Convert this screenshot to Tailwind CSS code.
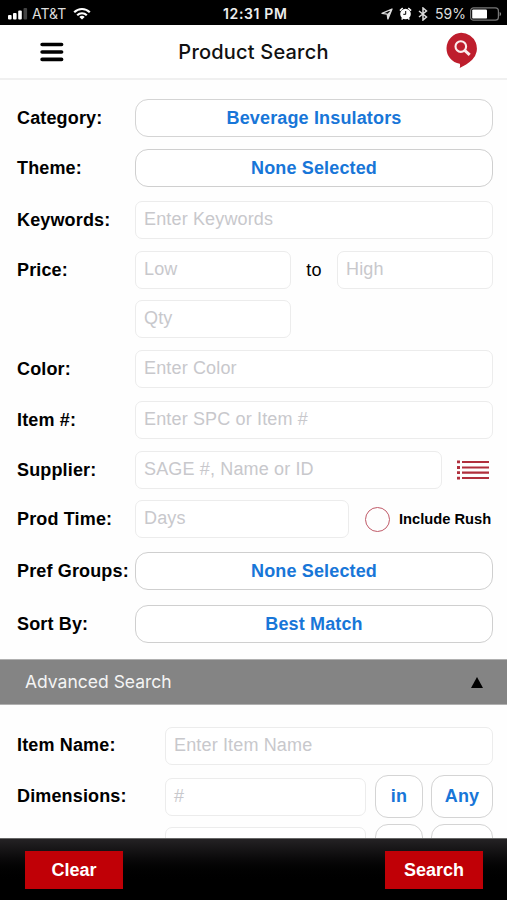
<!DOCTYPE html>
<html lang="en">
<head>
<meta charset="utf-8">
<title>Product Search</title>
<script src="https://cdn.jsdelivr.net/npm/@tailwindcss/browser@4"></script>
</head>
<body class="w-[507px] h-[900px] overflow-hidden bg-[#fefefe] font-['Liberation_Sans',sans-serif] text-[18px] text-black flex flex-col">

<header class="h-[25px] shrink-0 bg-black text-white font-['Inter',sans-serif] text-[13px] flex items-center pl-2 pr-[5px] pt-[2px]">
  <div class="w-[215px] flex items-center">
    <svg class="w-5 h-3" viewBox="0 0 20 12"><g fill="#fff"><rect x="0" y="7" width="3.6" height="4.5" rx="1"/><rect x="5" y="5" width="3.6" height="6.5" rx="1"/><rect x="10.200" y="2.500" width="3.600" height="9" rx="1"/></g><rect x="15.500" y="0" width="3.600" height="11.500" rx="1" fill="#444"/></svg>
    <span class="ml-[4px] text-[#ddd] text-[14px]">AT&amp;T</span>
    <svg class="ml-[7px] w-[18px] h-[13px]" viewBox="0 0 18 13" fill="none" stroke="#fff" stroke-width="2.200"><path d="M1.200 5.200C5.600.9 12.400.9 16.800 5.200M4.200 8.200c2.700-2.600 6.900-2.600 9.600 0"/><path d="M6.300 9.900c1.600-1.500 3.800-1.500 5.400 0L9 12.600z" fill="#fff" stroke="none"/></svg>
  </div>
  <div class="font-semibold text-[14px] tracking-[0.650px] whitespace-nowrap text-[#eee]">12:31 PM</div>
  <div class="flex-1 flex items-center justify-end">
    <svg class="w-3 h-3" viewBox="0 0 12 12" fill="none" stroke="#ddd" stroke-width="1.300" stroke-linejoin="round"><path d="M1 5.400 11 1 6.900 11l-.7-4.800z"/><path d="M6.200 6.200 11 1 6.900 11z" fill="#ddd" stroke="none"/></svg>
    <svg class="ml-[6px] w-[13px] h-[13px]" viewBox="0 0 13 13"><circle cx="6.500" cy="7" r="5.300" fill="#fff"/><path d="M.9 3.600 3.700 1M12.100 3.600 9.300 1M2.600 12.500l1.200-1.300M10.400 12.500l-1.200-1.300" stroke="#fff" stroke-width="1.500"/><path d="M6.700 4v3.300H4.300" stroke="#000" fill="none"/></svg>
    <svg class="ml-[6px] w-[10px] h-[14px]" viewBox="0 0 10 14" fill="none" stroke="#ddd" stroke-width="1.500"><path d="m1 4 7.500 6L5 13V1l3.500 3L1 10"/></svg>
    <span class="ml-[7px] text-[#ddd] text-[14px]">59%</span>
    <svg class="ml-[4px] w-[32px] h-[14px]" viewBox="0 0 32 14"><rect x=".6" y=".8" width="27.800" height="12.400" rx="3" fill="none" stroke="#777" stroke-width="1.200"/><rect x="2.200" y="2.400" width="14.800" height="9.200" rx="1.200" fill="#fff"/><path d="M29.600 5v4.200q1.500-.5 1.500-2.100T29.600 5" fill="#888"/></svg>
  </div>
</header>

<nav class="h-[55px] shrink-0 bg-white border-b-2 border-[#f0f0f0] grid grid-cols-[1fr_auto_1fr] items-center pl-[29px] pr-[29px]">
  <svg class="ml-[11px] w-6 h-5" viewBox="0 0 24 20" stroke="#000" stroke-width="3.600" stroke-linecap="round"><path d="M2.100 2.500h19.500M2.100 10h19.500M2.100 17.400h19.500"/></svg>
  <h1 class="font-['Inter',sans-serif] font-medium text-[20px] tracking-[0.2px] text-[#111] pt-px">Product Search</h1>
  <svg class="justify-self-end w-[33px] h-[37px] relative -top-[1px]" viewBox="0 0 33 37"><path d="M16.200.8a15.700 15.700 0 0 1 11 26.900C23.500 31 19 34 14.700 36c.5-1.500.5-3.300.1-4.200A15.600 15.600 0 0 1 16.200.8z" fill="#be1e2d"/><circle cx="15.800" cy="14.600" r="5.300" fill="none" stroke="#fbeeee" stroke-width="2.100"/><path d="m19.700 18.400 5 4.500" stroke="#fbeeee" stroke-width="3"/></svg>
</nav>

<main class="h-[579px] shrink-0 pt-[19px] pl-[17px] pr-[14px] flex flex-col font-bold tracking-[0.150px]">
  <div class="h-[38px] flex items-center"><span class="w-[118px] whitespace-nowrap">Category:</span><button class="flex-1 h-[38px] border-[1.500px] border-[#d4d4d4] rounded-[13px] text-[#1876d8] font-bold bg-white">Beverage Insulators</button></div>
  <div class="mt-[12px] h-[38px] flex items-center"><span class="w-[118px]">Theme:</span><button class="flex-1 h-[38px] border border-[#cfcfcf] rounded-[13px] text-[#1876d8] font-bold bg-white">None Selected</button></div>
  <div class="mt-[14px] h-[38px] flex items-center"><span class="w-[118px]">Keywords:</span><div class="flex-1 h-[38px] border border-[#ececec] rounded-[7px] bg-white pl-2 leading-[35px] font-normal text-[#c8c8cc]">Enter Keywords</div></div>
  <div class="mt-[12px] h-[38px] flex items-center"><span class="w-[118px]">Price:</span><div class="w-[156px] h-[38px] border border-[#ececec] rounded-[7px] bg-white pl-2 leading-[35px] font-normal text-[#c8c8cc]">Low</div><span class="w-[46px] text-center font-normal">to</span><div class="flex-1 h-[38px] border border-[#ececec] rounded-[7px] bg-white pl-2 leading-[35px] font-normal text-[#c8c8cc]">High</div></div>
  <div class="mt-[11px] h-[38px] flex items-center pl-[118px]"><div class="w-[156px] h-[38px] border border-[#ececec] rounded-[7px] bg-white pl-2 leading-[35px] font-normal text-[#c8c8cc]">Qty</div></div>
  <div class="mt-[12px] h-[38px] flex items-center"><span class="w-[118px]">Color:</span><div class="flex-1 h-[38px] border border-[#ececec] rounded-[7px] bg-white pl-2 leading-[35px] font-normal text-[#c8c8cc]">Enter Color</div></div>
  <div class="mt-[13px] h-[38px] flex items-center"><span class="w-[118px]">Item #:</span><div class="flex-1 h-[38px] border border-[#ececec] rounded-[7px] bg-white pl-2 leading-[35px] font-normal text-[#c8c8cc]">Enter SPC or Item #</div></div>
  <div class="mt-[12px] h-[38px] flex items-center"><span class="w-[118px]">Supplier:</span><div class="w-[307px] h-[38px] border border-[#ececec] rounded-[7px] bg-white pl-2 leading-[35px] font-normal text-[#c8c8cc]">SAGE #, Name or ID</div>
    <svg class="ml-[15px] w-8 h-5 -mt-px" viewBox="0 0 32 20" stroke="#b02f3c" stroke-width="2.200"><path d="M5 2h27M5 7.500h27M5 12.700h27M5 18h27"/><path d="M0 1.800h3M0 7.500h3M0 12.700h3M0 18.200h3" stroke-width="2.800"/></svg>
  </div>
  <div class="mt-[11px] h-[38px] flex items-center"><span class="w-[118px]">Prod Time:</span><div class="w-[214px] h-[38px] border border-[#ececec] rounded-[7px] bg-white pl-2 leading-[35px] font-normal text-[#c8c8cc]">Days</div><span class="ml-4 w-[25px] h-[25px] rounded-full border border-[#c05a68]"></span><span class="ml-[9px] text-[14.700px] tracking-normal whitespace-nowrap">Include Rush</span></div>
  <div class="mt-[14px] h-[38px] flex items-center"><span class="w-[118px] whitespace-nowrap">Pref Groups:</span><button class="flex-1 h-[38px] border border-[#cfcfcf] rounded-[13px] text-[#1876d8] font-bold bg-white">None Selected</button></div>
  <div class="mt-[15px] h-[38px] flex items-center"><span class="w-[118px]">Sort By:</span><button class="flex-1 h-[38px] border border-[#cfcfcf] rounded-[13px] text-[#1876d8] font-bold bg-white">Best Match</button></div>
</main>

<div class="h-[46px] shrink-0 bg-[#848484] border-y border-[#b0b0b0] flex items-center justify-between pl-[25px] pr-[24px]">
  <span class="font-['Inter',sans-serif] text-[17.500px] text-[#f4f4f4] pt-px">Advanced Search</span>
  <svg class="w-3 h-[11px]" viewBox="0 0 12 11"><path d="M6 0 12 11H0z"/></svg>
</div>

<section class="h-[133px] shrink-0 overflow-hidden pt-[20px] pl-[17px] pr-[14px] font-bold tracking-[0.150px]">
  <div class="h-[41px] flex items-center"><span class="w-[148px]">Item Name:</span><div class="flex-1 h-[38px] border border-[#ececec] rounded-[7px] bg-white pl-2 leading-[35px] font-normal text-[#c8c8cc]">Enter Item Name</div></div>
  <div class="mt-[9px] h-[43px] flex items-center"><span class="w-[148px]">Dimensions:</span><div class="w-[201px] h-[38px] border border-[#ececec] rounded-[7px] bg-white pl-2 leading-[35px] font-normal text-[#c8c8cc]">#</div><button class="ml-[9px] w-[48px] h-[43px] border border-[#d4d4d4] rounded-[13px] text-[#1876d8] font-bold bg-white">in</button><button class="ml-[8px] flex-1 h-[43px] border border-[#d4d4d4] rounded-[13px] text-[#1876d8] font-bold bg-white">Any</button></div>
  <div class="mt-[6px] h-[43px] flex items-center pl-[148px]"><div class="w-[201px] h-[38px] border border-[#ececec] rounded-[7px] bg-white"></div><div class="ml-[9px] w-[48px] h-[43px] border border-[#d4d4d4] rounded-[13px] bg-white"></div><div class="ml-[8px] flex-1 h-[43px] border border-[#d4d4d4] rounded-[13px] bg-white"></div></div>
</section>

<footer class="h-[62px] shrink-0 bg-linear-to-b from-[#242224] to-black to-75% border-t border-[#666] px-[25px] pr-[24px] pt-px flex items-center justify-between font-bold text-white">
  <button class="w-[98px] h-[38px] bg-[#c00006]">Clear</button>
  <button class="w-[98px] h-[38px] bg-[#c00006]">Search</button>
</footer>
</body>
</html>
